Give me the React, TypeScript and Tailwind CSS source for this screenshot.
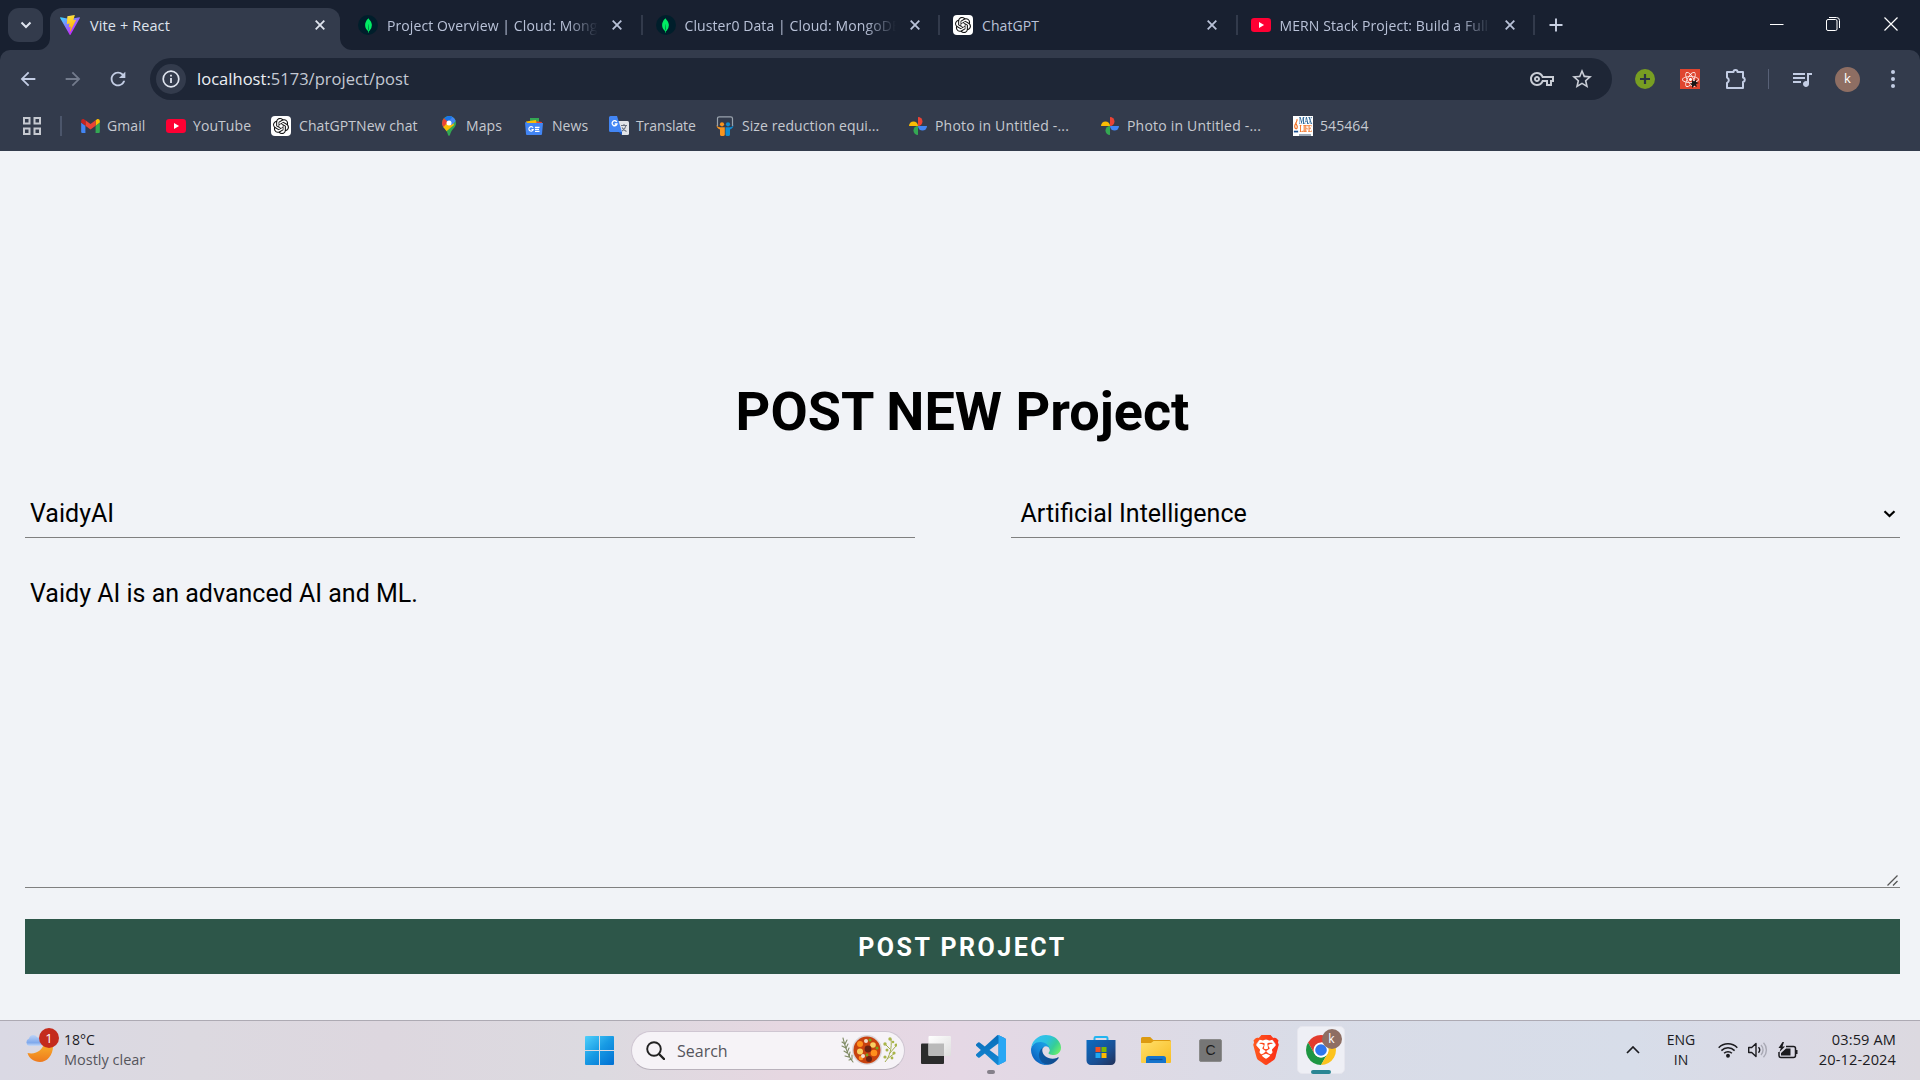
import type { ReactNode } from "react";
import { SiOpenai, SiMongodb, SiBrave } from "react-icons/si";
import { MdArrowBack, MdArrowForward, MdRefresh, MdStarBorder, MdOutlineVpnKey, MdQueueMusic } from "react-icons/md";
import { FaReact } from "react-icons/fa";

/* ---------- Logos ---------- */

function ViteLogo() {
  return (
    <svg viewBox="0 0 256 257" className="size-5">
      <defs>
        <linearGradient id="viteA" x1="0" x2=".6" y1=".1" y2=".8">
          <stop offset="0" stopColor="#41d1ff" />
          <stop offset="1" stopColor="#bd34fe" />
        </linearGradient>
        <linearGradient id="viteB" x1=".4" x2=".6" y1="0" y2="1">
          <stop offset="0" stopColor="#ffea83" />
          <stop offset=".1" stopColor="#ffdd35" />
          <stop offset="1" stopColor="#ffa800" />
        </linearGradient>
      </defs>
      <path fill="url(#viteA)" d="M255.153 37.938L134.897 252.976c-2.483 4.44-8.862 4.466-11.382.048L.875 37.958c-2.746-4.814 1.371-10.646 6.827-9.67l120.385 21.517a6.537 6.537 0 0 0 2.322-.004l117.867-21.483c5.438-.991 9.574 4.796 6.877 9.62Z" />
      <path fill="url(#viteB)" d="M185.432.063L96.44 17.501a3.268 3.268 0 0 0-2.634 3.014l-5.474 92.456a3.268 3.268 0 0 0 3.997 3.378l24.777-5.718c2.318-.535 4.413 1.507 3.936 3.838l-7.361 36.047c-.495 2.426 1.782 4.5 4.151 3.78l15.304-4.649c2.372-.72 4.652 1.36 4.15 3.788l-11.698 56.621c-.732 3.542 3.979 5.473 5.943 2.437l1.313-2.028l72.516-144.72c1.215-2.423-.88-5.186-3.54-4.672l-25.505 4.922c-2.396.462-4.435-1.77-3.759-4.114l16.646-57.705c.677-2.35-1.37-4.583-3.769-4.113Z" />
    </svg>
  );
}

function MongoLogo() {
  return (
    <span className="flex size-5 items-center justify-center rounded-full bg-[#001e2b]">
      <SiMongodb className="size-[15px] text-[#00ed64]" />
    </span>
  );
}

function OpenAiLogo() {
  return (
    <span className="flex size-5 items-center justify-center rounded-[4px] bg-white">
      <SiOpenai className="size-4 text-[#111]" />
    </span>
  );
}

function YouTubeLogo() {
  return (
    <svg viewBox="0 0 20 14" className="h-[14px] w-5">
      <rect width="20" height="14" rx="3.2" fill="#ff0033" />
      <path d="M8 4.1v5.8L13.1 7z" fill="#fff" />
    </svg>
  );
}

function GmailLogo() {
  return (
    <svg viewBox="52 42 88 66" className="h-[14px] w-[19px]">
      <path fill="#4285f4" d="M58 108h14V74L52 59v43c0 3.32 2.69 6 6 6" />
      <path fill="#34a853" d="M120 108h14c3.32 0 6-2.69 6-6V59l-20 15" />
      <path fill="#fbbc04" d="M120 48v26l20-15v-8c0-7.42-8.47-11.65-14.4-7.2" />
      <path fill="#ea4335" d="M72 74V48l24 18 24-18v26L96 92" />
      <path fill="#c5221f" d="M52 51v8l20 15V48l-5.6-4.2c-5.94-4.45-14.4-.22-14.4 7.2" />
    </svg>
  );
}

function MapsLogo() {
  return (
    <svg viewBox="0 0 14 20" className="h-5 w-[14px]">
      <defs>
        <clipPath id="pin">
          <path d="M7 0a7 7 0 0 1 7 7c0 4-3.2 5.600-4.700 8.500C8.200 17.600 8 20 7 20s-1.200-2.400-2.300-4.500C3.200 12.600 0 11 0 7a7 7 0 0 1 7-7z" />
        </clipPath>
      </defs>
      <g clipPath="url(#pin)">
        <path fill="#34a853" d="M0 0h14v20H0z" />
        <path fill="#fbbc04" d="M0 11 9 1l3 8-8.500 7H0z" />
        <path fill="#4285f4" d="M4 0h10v5L9.500 9 6 7l3-5z" />
        <path fill="#1a73e8" d="M2 2 7-1l4 1-5 7z" />
        <path fill="#ea4335" d="M0 2h1.700L6 6 1.500 11 0 10z" />
      </g>
      <circle cx="7" cy="7" r="2.500" fill="#fff" />
    </svg>
  );
}

function NewsLogo() {
  return (
    <svg viewBox="0 0 18 17" className="h-[17px] w-[18px]">
      <path fill="#34a853" d="M5 0h9v8H5z" />
      <path fill="#ea4335" d="m9 3 8 1-1 8H9z" />
      <path fill="#fbbc04" d="M1 3.500 11 2l1 7H1z" />
      <path fill="#4285f4" d="M0 4.500 2 4v1h16l-1 11a1 1 0 0 1-1 1H2a1 1 0 0 1-1-1z" />
      <path fill="none" stroke="#fff" strokeWidth="1.200" d="M8 9.800A2.200 2.200 0 1 0 8.200 11.500H6.500M10 9.300h4.500M10 11.300h4M10 13.300h4.500" />
    </svg>
  );
}

function TranslateLogo() {
  return (
    <svg viewBox="0 0 20 20" className="size-5">
      <path fill="#e2e4e8" d="M9 5h9.500A1.500 1.500 0 0 1 20 6.500v11a1.500 1.500 0 0 1-1.500 1.500H13z" />
      <path fill="none" stroke="#6b7280" strokeWidth="1.100" d="M12 9.500h6M15 8v1.500M17 9.500c-.5 3-2.500 4.500-4 5.500M13 11.500c1 2 2.500 3 4.500 4" />
      <path fill="#4285f4" d="M1.500 0H8l5 16H1.500A1.500 1.500 0 0 1 0 14.500v-13A1.500 1.500 0 0 1 1.500 0z" />
      <path fill="#1a56c4" d="m9.500 16 3.500 3 0-3z" />
      <path fill="none" stroke="#fff" strokeWidth="1.300" d="M7.800 6A2.500 2.500 0 1 0 8 8H5.700" />
    </svg>
  );
}

function SlideShareLogo() {
  return (
    <svg viewBox="0 0 18 20" className="h-5 w-[18px]">
      <path d="M1.500 10V2.500a1.700 1.700 0 0 1 1.700-1.700h11.600a1.700 1.700 0 0 1 1.700 1.700V10" fill="none" stroke="#9aa3ad" strokeWidth="1.200" />
      <circle cx="6" cy="8.300" r="2.100" fill="#f7941e" />
      <circle cx="12" cy="8.300" r="2.100" fill="#0f8bd0" />
      <path fill="#f7941e" d="M.5 9c1.500 2.300 3 2.500 8.300 2.300V18.500c0 1-1 1.500-2.400 1.500S4 19.500 4 18.500V13.500C1.800 12.800.5 11 .5 9z" />
      <path fill="#0f8bd0" d="M17.500 9c-1.500 2.300-3 2.500-8 2.300v7.200c0 1 .8 1.500 2.200 1.500s2.300-.5 2.300-1.500V13.500c2.200-.7 3.500-2.500 3.500-4.500z" />
    </svg>
  );
}

function PhotosLogo() {
  return (
    <svg viewBox="0 0 18 18" className="size-[18px]">
      <path fill="#ea4335" d="M9 0a4.500 4.500 0 0 1 4.500 4.500A4.500 4.500 0 0 1 9 9z" />
      <path fill="#4285f4" d="M18 9a4.500 4.500 0 0 1-9 0z" />
      <path fill="#34a853" d="M9 18a4.500 4.500 0 0 1 0-9z" />
      <path fill="#fbbc04" d="M0 9a4.500 4.500 0 0 1 9 0z" />
    </svg>
  );
}

function MaxLifeLogo() {
  return (
    <span className="flex size-5 items-center bg-white">
      <svg viewBox="0 0 7 20" className="h-5 w-[6px] shrink-0">
        <path d="M4.500 2c1.500 3-3 5-2.500 9 .4 3 3 3 3 0 0-2-1.500-3-2-5" fill="none" stroke="#f37021" strokeWidth="1.400" />
        <path d="M1 15.500h5v2H1z" fill="#1b4f8f" />
      </svg>
      <span className="flex flex-col items-center font-['Liberation_Serif'] text-[6px] leading-[8px] font-bold tracking-[-0.5px]">
        <span className="scale-y-[1.6] text-[#2a6496]">MAX</span>
        <span className="scale-y-[1.6] text-[#f37021]">LIFE</span>
        <span className="mt-px h-[2px] w-3 bg-[#9aa8b8]" />
      </span>
    </span>
  );
}

function ChromeLogo() {
  return (
    <svg viewBox="0 0 48 48" className="size-[30px]">
      <path fill="#e33b2e" d="M24 12h20.780a24 24 0 0 0-41.560 0L13.610 30z" />
      <path fill="#1e9642" d="M34.390 30 24 48A24 24 0 0 1 3.220 12L13.610 30a12 12 0 0 0 20.780 0" />
      <path fill="#fcc31e" d="M34.390 30 24 48A24 24 0 0 0 44.780 12H24a12 12 0 0 1 10.390 18z" />
      <circle cx="24" cy="24" r="12" fill="#fff" />
      <circle cx="24" cy="24" r="9.300" fill="#2f77ee" />
    </svg>
  );
}

function EdgeLogo() {
  return (
    <svg viewBox="0 0 256 256" className="size-[30px]">
      <defs>
        <linearGradient id="edgeA" x1="0" x2="1" y1=".6" y2=".6">
          <stop offset="0" stopColor="#0c59a4" />
          <stop offset="1" stopColor="#114a8b" />
        </linearGradient>
        <linearGradient id="edgeB" x1=".9" x2=".3" y1=".3" y2="1">
          <stop offset="0" stopColor="#1b9de2" />
          <stop offset=".5" stopColor="#1483d8" />
          <stop offset="1" stopColor="#0b5cb8" />
        </linearGradient>
        <linearGradient id="edgeC" x1="0" x2="1" y1=".2" y2=".7">
          <stop offset="0" stopColor="#35c1f1" />
          <stop offset=".45" stopColor="#2dc2df" />
          <stop offset=".75" stopColor="#36cd98" />
          <stop offset="1" stopColor="#66eb6e" />
        </linearGradient>
      </defs>
      <g transform="translate(-4.630 -4.920)">
        <path fill="url(#edgeA)" d="M235.680,195.460a93.730,93.730,0,0,1-10.540,4.710,101.870,101.870,0,0,1-35.900,6.460c-47.320,0-88.540-32.550-88.540-74.320A31.480,31.480,0,0,1,117.130,105c-42.800,1.800-53.800,46.400-53.800,72.530,0,73.880,68.090,81.370,82.760,81.370,7.910,0,19.840-2.300,27-4.560l1.310-.44A128.340,128.340,0,0,0,241,201.100a4,4,0,0,0-5.340-5.640Z" />
        <path fill="url(#edgeB)" d="M110.340,246.340A79.200,79.200,0,0,1,87.600,225,80.720,80.720,0,0,1,117.130,105c3.120-1.470,8.450-4.130,15.540-4a32.350,32.350,0,0,1,25.690,13,31.880,31.880,0,0,1,6.360,18.660c0-.21,24.460-79.600-80-79.600-43.900,0-80,41.660-80,78.210a130.150,130.150,0,0,0,12.110,56,128,128,0,0,0,156.380,67.110,75.550,75.550,0,0,1-62.780-8Z" />
        <path fill="url(#edgeC)" d="M156.940,153.780c-.81,1.050-3.300,2.500-3.300,5.660,0,2.610,1.700,5.120,4.720,7.230,14.380,10,41.490,8.680,41.560,8.680a59.560,59.560,0,0,0,30.270-8.350A61.380,61.380,0,0,0,260.630,114c.26-22.410-8-37.310-11.340-43.910C228.090,28.760,182.350,5,132.630,5A128,128,0,0,0,4.630,131.200C5.110,94.710,41.340,65.250,84.630,65.250c3.510,0,23.510.34,42.070,10.070,16.340,8.580,24.900,18.940,30.850,29.210,6.180,10.670,7.280,24.150,7.280,29.520S162.090,147.370,156.940,153.780Z" />
      </g>
    </svg>
  );
}

function VsCodeLogo() {
  return (
    <svg viewBox="0 0 24 24" className="size-[30px]">
      <defs>
        <linearGradient id="vsA" x1="0" x2="0" y1="0" y2="1">
          <stop offset="0" stopColor="#0a6db8" />
          <stop offset="1" stopColor="#1387d4" />
        </linearGradient>
      </defs>
      <path fill="url(#vsA)" d="M23.150 2.587L18.210.21a1.494 1.494 0 0 0-1.705.29l-9.460 8.630-4.120-3.128a.999.999 0 0 0-1.276.057L.327 7.261A1 1 0 0 0 .326 8.740L3.899 12 .326 15.260a1 1 0 0 0 .001 1.479L1.650 17.940a.999.999 0 0 0 1.276.057l4.120-3.128 9.460 8.630a1.492 1.492 0 0 0 1.704.29l4.942-2.377A1.500 1.500 0 0 0 24 20.060V3.939a1.500 1.500 0 0 0-.850-1.352zm-5.146 14.861L10.826 12l7.178-5.448v10.896z" />
      <path fill="#29a7f4" d="M23.150 2.587 18.210.21a1.494 1.494 0 0 0-1.100-.050c.5.200.894.700.894 1.390v20.900c0 .7-.4 1.200-.9 1.400.37.130.77.110 1.106-.060l4.942-2.377A1.500 1.500 0 0 0 24 20.060V3.939a1.500 1.500 0 0 0-.850-1.352z" />
    </svg>
  );
}

function StoreLogo() {
  return (
    <svg viewBox="0 0 30 30" className="size-[30px]">
      <defs>
        <linearGradient id="storeA" x1="0" x2="1" y1="0" y2="1">
          <stop offset="0" stopColor="#0a6cc2" />
          <stop offset=".6" stopColor="#1a4f93" />
          <stop offset="1" stopColor="#213058" />
        </linearGradient>
      </defs>
      <path d="M8.500 7V3.200A1.200 1.200 0 0 1 9.700 2h10.600a1.200 1.200 0 0 1 1.200 1.200V7" fill="none" stroke="#22b5f0" strokeWidth="2" />
      <path fill="url(#storeA)" d="M.5 5h29v20.500a4.500 4.500 0 0 1-4.500 4.500H5A4.500 4.500 0 0 1 .5 25.500z" />
      <path fill="#f25022" d="M9.500 12h5v5h-5z" />
      <path fill="#7fba00" d="M15.500 12h5v5h-5z" />
      <path fill="#1fa8f0" d="M9.500 18h5v5h-5z" />
      <path fill="#ffb900" d="M15.500 18h5v5h-5z" />
    </svg>
  );
}

function FolderLogo() {
  return (
    <svg viewBox="0 0 30 26" className="h-[26px] w-[30px]">
      <defs>
        <linearGradient id="folderA" x1="0" x2="1" y1="0" y2="1">
          <stop offset="0" stopColor="#ffdf6b" />
          <stop offset="1" stopColor="#f8bd22" />
        </linearGradient>
      </defs>
      <path fill="#dc9a10" d="M0 1.500A1.500 1.500 0 0 1 1.500 0h7.700l3 3H28.500A1.500 1.500 0 0 1 30 4.500V12H0z" />
      <path fill="url(#folderA)" d="M0 6h10l2.600-2H29a1 1 0 0 1 1 1v20a1 1 0 0 1-1 1H1a1 1 0 0 1-1-1z" />
      <path fill="#1574cc" d="M5 26v-4.500A2.500 2.500 0 0 1 7.500 19h15a2.500 2.500 0 0 1 2.500 2.500V26z" />
      <path stroke="#0b4f9c" strokeWidth="1.200" d="M8.500 22.500h13" />
    </svg>
  );
}

function BraveLogo() {
  return (
    <svg viewBox="0 0 24 24" className="size-[30px]">
      <defs>
        <linearGradient id="braveA" x1="0" x2="1" y1="0" y2="0">
          <stop offset="0" stopColor="#ff5a1f" />
          <stop offset="1" stopColor="#fb2d16" />
        </linearGradient>
      </defs>
      <path fill="#fff" d="M7 4h10l2.500 4-2 10-5.500 4-5.500-4-2-10z" />
      <SiBrave size={24} fill="url(#braveA)" />
    </svg>
  );
}

function WindowsLogo() {
  return (
    <svg viewBox="0 0 29 29" className="size-[29px]">
      <defs>
        <linearGradient id="winA" gradientUnits="userSpaceOnUse" x1="0" x2="26" y1="0" y2="29">
          <stop offset="0" stopColor="#4fd0fb" />
          <stop offset=".5" stopColor="#189be4" />
          <stop offset="1" stopColor="#0273d4" />
        </linearGradient>
      </defs>
      <path fill="url(#winA)" d="M1 0h13v14H0V1a1 1 0 0 1 1-1zM15 0h13a1 1 0 0 1 1 1v13H15zM0 15h14v14H1a1 1 0 0 1-1-1zM15 15h14v13a1 1 0 0 1-1 1H15z" />
    </svg>
  );
}

function TaskViewIcon() {
  return (
    <svg viewBox="0 0 30 28" className="h-7 w-[30px]">
      <defs>
        <linearGradient id="tvA" x1="0" x2="1" y1="0" y2="1">
          <stop offset="0" stopColor="#fff" />
          <stop offset="1" stopColor="#dedede" />
        </linearGradient>
      </defs>
      <rect y="7.500" width="23" height="20.500" rx="1" fill="#2b2c2c" />
      <rect x="7.500" width="22.500" height="20" rx="1" fill="url(#tvA)" />
      <path d="M7.500 7.500H23V20H8.500a1 1 0 0 1-1-1z" fill="#b9b9b9" />
    </svg>
  );
}

function StewIllustration() {
  return (
    <svg viewBox="0 0 56 32" className="h-8 w-14">
      <g fill="none" stroke="#7f8a63" strokeWidth="1.100" strokeLinecap="round">
        <path d="M2 4c2 8 4 17 10 24" />
        <path d="M1 8l3 2 2-4M1 12l4 2 2-4M3 17l3 2 2-5M4 22l4 1 1-5M8 26l3-1v-4" />
      </g>
      <g stroke="#a3ad4e" strokeWidth="1" fill="none">
        <path d="M44 28c5-6 7-14 6-23M46 25l8-6M48 20l7-8M49 15l-5-5" />
      </g>
      <g fill="#a9b54a">
        <circle cx="49" cy="5" r="1.700" /><circle cx="44" cy="10" r="1.700" /><circle cx="55" cy="11" r="1.500" />
        <circle cx="53" cy="19" r="1.600" /><circle cx="46" cy="16" r="1.500" /><circle cx="44" cy="23" r="1.600" />
        <circle cx="51" cy="24" r="1.400" /><circle cx="52" cy="8" r="1.300" />
      </g>
      <circle cx="26" cy="16" r="15" fill="#d9d6da" />
      <circle cx="26" cy="16" r="13.500" fill="#c8420f" />
      <g fill="#ff8f1c"><circle cx="19" cy="10" r="3" /><circle cx="33" cy="19" r="3.300" /><circle cx="20" cy="24" r="2.300" /></g>
      <g fill="#f8cf62"><circle cx="19" cy="17.500" r="3" /><circle cx="32" cy="11" r="2.800" /></g>
      <g fill="#6b2413"><circle cx="27" cy="15" r="3.400" /><circle cx="28" cy="25" r="3" /></g>
      <g fill="#f2dfcf"><circle cx="25" cy="7" r="2" /><circle cx="22" cy="22" r="2" /></g>
      <g fill="#77a51d"><circle cx="29" cy="6" r="1.500" /><circle cx="36" cy="14" r="1.500" /><circle cx="26" cy="21" r="1.400" /></g>
    </svg>
  );
}

function WeatherIcon() {
  return (
    <div className="relative size-[34px]">
      <svg viewBox="0 0 34 34" className="size-[34px]">
        <defs>
          <linearGradient id="moon" x1="0" x2="0" y1="0" y2="1">
            <stop offset="0" stopColor="#f9b52c" />
            <stop offset="1" stopColor="#ee7a1e" />
          </linearGradient>
          <linearGradient id="cloud" x1="0" x2="0" y1="0" y2="1">
            <stop offset="0" stopColor="#bcd3f7" />
            <stop offset=".7" stopColor="#7fa9ec" />
            <stop offset="1" stopColor="#c8dbf8" />
          </linearGradient>
        </defs>
        <path fill="url(#moon)" d="M2.500 25C11 27 18.500 22 19 14l9 4c0 9.500-6 16-13 16-6 0-11-3.500-12.500-9z" />
        <path fill="url(#cloud)" d="M4 18a4 4 0 0 1 0-7.500c.5-3.500 5.500-5.500 8.500-1 3.500 0 6 2.500 6 4.500S17 18 14 18z" />
      </svg>
      <span className="absolute top-0 right-0 flex size-5 items-center justify-center rounded-full bg-[#c42b1c] text-[13px] leading-none text-white">1</span>
    </div>
  );
}

/* ---------- Browser ---------- */

function CloseIcon() {
  return (
    <svg viewBox="0 0 10 10" className="size-[10px] shrink-0">
      <path d="M.7.7l8.600 8.600M9.300.7L.7 9.300" stroke="currentColor" strokeWidth="1.800" />
    </svg>
  );
}

const TABS: { title: string; icon: ReactNode; faded: boolean }[] = [
  { title: "Project Overview | Cloud: Mong", icon: <MongoLogo />, faded: true },
  { title: "Cluster0 Data | Cloud: MongoDB", icon: <MongoLogo />, faded: true },
  { title: "ChatGPT", icon: <OpenAiLogo />, faded: false },
  { title: "MERN Stack Project: Build a Full", icon: <YouTubeLogo />, faded: true },
];

function TabStrip() {
  return (
    <div className="flex h-[50px] bg-[#182030] text-[14px] tracking-[0.1px] text-[#b9c2d8]">
      <div className="mt-2 ml-2 flex h-[34px] w-[35px] items-center justify-center rounded-[11px] bg-[#333b4c] text-[#dfe4ee]">
        <svg viewBox="0 0 12 8" className="h-2 w-3"><path d="M1.500 1.500 6 6l4.500-4.500" fill="none" stroke="currentColor" strokeWidth="2" /></svg>
      </div>
      <div className="relative ml-[7px] flex w-[290px] pt-2">
        <svg viewBox="0 0 12 12" className="absolute bottom-0 -left-3 size-3"><path d="M12 0v12H0A12 12 0 0 0 12 0z" fill="#333b4c" /></svg>
        <div className="flex h-full w-full items-center rounded-t-[12px] bg-[#333b4c] pr-[15px] pb-2 pl-[10px] text-[#dfe4ee]">
          <ViteLogo />
          <span className="ml-[10px] flex-1 pt-px text-[14.500px]">Vite + React</span>
          <CloseIcon />
        </div>
        <svg viewBox="0 0 12 12" className="absolute -right-3 bottom-0 size-3"><path d="M0 0v12h12A12 12 0 0 1 0 0z" fill="#333b4c" /></svg>
      </div>
      <div className="ml-[5px] flex">
        {TABS.map((t) => (
          <div key={t.title} className="flex h-full w-[297.500px] items-center pl-[13px]">
            {t.icon}
            <span className={"ml-[9px] w-[211px] overflow-hidden whitespace-nowrap" + (t.faded ? " [mask-image:linear-gradient(90deg,#000_85%,transparent)]" : "")}>{t.title}</span>
            <span className="ml-[14px] flex"><CloseIcon /></span>
            <span className="ml-auto h-5 w-[2px] bg-[#323a4b]" />
          </div>
        ))}
      </div>
      <div className="ml-[14px] flex items-center text-[#c8d0e2]">
        <svg viewBox="0 0 14 14" className="size-[14px]"><path d="M7 .5v13M.5 7h13" stroke="currentColor" strokeWidth="1.900" /></svg>
      </div>
      <div className="ml-auto flex h-full items-center pr-[22px] pb-[2px] text-white">
        <svg viewBox="0 0 14 14" className="size-[14px]"><path d="M0 7.500h13.500" stroke="currentColor" /></svg>
        <svg viewBox="0 0 14 14" className="ml-[42px] size-[14px]">
          <path d="M3 .5h7.500a3 3 0 0 1 3 3V11" fill="none" stroke="currentColor" />
          <rect x=".5" y="2.500" width="10.500" height="11" rx="1.500" fill="none" stroke="currentColor" />
        </svg>
        <svg viewBox="0 0 14 14" className="ml-[44px] size-[14px]"><path d="M.5.5l13 13M13.500.5l-13 13" stroke="currentColor" strokeWidth="1.200" /></svg>
      </div>
    </div>
  );
}

function Toolbar() {
  return (
    <div className="flex h-[58px] items-center rounded-t-[10px] bg-[#333b4c] text-[#c3cde4]">
      <div className="ml-[16.500px] flex w-[133.500px] items-center">
        <MdArrowBack className="size-[22px]" />
        <MdArrowForward className="ml-[23px] size-[22px] text-[#737b8c]" />
        <MdRefresh className="ml-[23px] size-[22px]" />
      </div>
      <div className="flex h-[42px] w-[1462px] items-center rounded-full bg-[#1e2636] pl-[6px]">
        <span className="flex size-[30px] items-center justify-center rounded-full bg-[#333b4c] text-[#dfe4ee]">
          <svg viewBox="0 0 18 18" className="size-[18px]">
            <circle cx="9" cy="9" r="7.800" fill="none" stroke="currentColor" strokeWidth="1.700" />
            <path d="M9 8v5M9 4.700v1.800" stroke="currentColor" strokeWidth="1.800" />
          </svg>
        </span>
        <span className="ml-[11px] flex-1 pt-px text-[16.500px] tracking-[0.030px] text-[#c4c9d3]"><span className="text-[#eceff4]">localhost:</span>5173/project/post</span>
        <MdOutlineVpnKey className="size-6 text-[#c9cdd6]" />
        <MdStarBorder className="mr-[18px] ml-[16px] size-6 text-[#c9cdd6]" />
      </div>
      <span className="ml-[23px] flex size-5 items-center justify-center rounded-full bg-[#789e22]">
        <svg viewBox="0 0 10 10" className="size-[10px]"><path d="M5 0v10M0 5h10" stroke="#2a3444" strokeWidth="2.200" /></svg>
      </span>
      <span className="relative ml-[25px] flex size-5 items-center justify-center bg-[#e0452f]">
        <FaReact className="size-[17px] text-white" />
        <svg viewBox="0 0 10 10" className="absolute right-px bottom-px size-[10px]"><path d="M3 2l2 1.500L7.500 1 7 4l3 1-3 1 1 3-2.500-1.500L3 10V7L1 6l2-1z" fill="#171717" /></svg>
      </span>
      <svg viewBox="0 0 22 22" className="ml-[25px] size-[22px]">
        <path d="M2 4h6.500a2 2 0 0 1 4 0H18v5.500a2.300 2.300 0 0 1 0 4.500v6H2v-5a3 3 0 0 0 0-5.500z" fill="none" stroke="currentColor" strokeWidth="2" strokeLinejoin="round" />
      </svg>
      <span className="ml-[21px] h-5 w-px bg-[#586177]" />
      <MdQueueMusic className="ml-[21px] size-6" />
      <span className="ml-[21px] flex size-[25px] items-center justify-center rounded-full bg-[#8e6e63] text-[13px] text-white">k</span>
      <svg viewBox="0 0 4 18" className="ml-[31px] h-[18px] w-1" fill="currentColor"><circle cx="2" cy="2" r="2" /><circle cx="2" cy="9" r="2" /><circle cx="2" cy="16" r="2" /></svg>
    </div>
  );
}

const BOOKMARKS: { label: string; icon: ReactNode; cls: string }[] = [
  { label: "Gmail", icon: <GmailLogo />, cls: "w-[85px] gap-[7px]" },
  { label: "YouTube", icon: <YouTubeLogo />, cls: "w-[105px] gap-[7px]" },
  { label: "ChatGPTNew chat", icon: <OpenAiLogo />, cls: "w-[171px] gap-[8px]" },
  { label: "Maps", icon: <MapsLogo />, cls: "w-[83px] gap-[10px]" },
  { label: "News", icon: <NewsLogo />, cls: "w-[84px] gap-[9px]" },
  { label: "Translate", icon: <TranslateLogo />, cls: "w-[107px] gap-[7px] tracking-[-0.100px]" },
  { label: "Size reduction equi...", icon: <SlideShareLogo />, cls: "w-[193px] gap-[8px]" },
  { label: "Photo in Untitled -...", icon: <PhotosLogo />, cls: "w-[192px] gap-[8px] tracking-[0.200px]" },
  { label: "Photo in Untitled -...", icon: <PhotosLogo />, cls: "w-[192px] gap-[8px] tracking-[0.200px]" },
  { label: "545464", icon: <MaxLifeLogo />, cls: "w-[90px] gap-[7px]" },
];

function BookmarksBar() {
  return (
    <div className="flex h-[43px] items-center bg-[#333b4c] pb-[7px] pl-[23px] text-[14px] tracking-[0.080px] text-[#c6c9d0]">
      <svg viewBox="0 0 18 18" className="size-[18px]" fill="none" stroke="currentColor" strokeWidth="2">
        <path d="M1 1h5.500v5.500H1zM11.500 1H17v5.500h-5.500zM1 11.500h5.500V17H1zM11.500 11.500H17V17h-5.500z" />
      </svg>
      <span className="mr-[19px] ml-[19px] h-5 w-[2px] bg-[#4c566b]" />
      {BOOKMARKS.map((b, i) => (
        <div key={i} className={"flex shrink-0 items-center whitespace-nowrap " + b.cls}>
          {b.icon}
          <span className="pb-[2px]">{b.label}</span>
        </div>
      ))}
    </div>
  );
}

/* ---------- Page ---------- */

function PostProject() {
  return (
    <main className="flex h-[869px] flex-col bg-[#f1f3f7] px-[25px] pr-5 pt-[226px] font-['Roboto'] text-[25px] text-black">
      <h1 className="text-center text-[54px] leading-[70px] font-bold">POST NEW Project</h1>
      <div className="mt-[41px] grid grid-cols-2 gap-24">
        <input defaultValue="VaidyAI" className="h-[50px] border-b border-[#808080] bg-transparent px-[5px] pt-[2px] outline-none" />
        <div className="flex h-[50px] items-center justify-between border-b border-[#808080] pt-[3px] pr-[4px] pl-[10px]">
          <span>Artificial Intelligence</span>
          <svg viewBox="0 0 13 8" className="h-2 w-[13px]"><path d="M1.500 1.300 6.500 6l5-4.700" fill="none" stroke="#000" strokeWidth="2.200" /></svg>
        </div>
      </div>
      <div className="relative mt-[30px] h-[320px]">
        <textarea defaultValue="Vaidy AI is an advanced AI and ML." className="block h-full w-full resize-none border-b border-[#808080] bg-transparent px-[5px] pt-[11px] leading-[30px] outline-none" />
        <svg viewBox="0 0 11 11" className="absolute right-[2px] bottom-[2px] size-[11px]"><path d="M.5 10.500l10-10M6 10.500l4.500-4.500" stroke="#555" strokeWidth="1.300" /></svg>
      </div>
      <button className="mt-[31px] h-[55px] bg-[#2d5649] pt-[2px] font-bold tracking-[2.500px] text-white">POST PROJECT</button>
    </main>
  );
}

/* ---------- Taskbar ---------- */

const APPS: ReactNode[] = [
  <TaskViewIcon />,
  <VsCodeLogo />,
  <EdgeLogo />,
  <StoreLogo />,
  <FolderLogo />,
  <span className="flex size-[23px] items-center justify-center rounded-[2px] border border-[#8b8b8b] bg-[#767676] font-['Liberation_Sans'] text-[14px] text-[#1c1c1c]">C</span>,
  <BraveLogo />,
];

function Taskbar() {
  return (
    <footer className="flex h-[60px] items-center border-t border-[#adaab3] bg-[linear-gradient(90deg,#dad9e4_0%,#dcd9e0_10%,#ddd7df_20%,#dcdae0_31%,#e6d7e1_41%,#e5d8e5_50%,#dfdae5_58%,#d9dce7_68%,#d7dde9_85%,#dbdae5_93%,#dcd9e0_100%)] pb-px text-[14px] text-[#1b1b1f]">
      <div className="flex w-[585px] items-center pl-[25px]">
        <div className="pb-[10px]"><WeatherIcon /></div>
        <div className="ml-[5px] pb-px leading-5">
          <div>18°C</div>
          <div className="text-[14.500px] text-[#55555c]">Mostly clear</div>
        </div>
      </div>
      <WindowsLogo />
      <div className="ml-[17px] flex h-[39px] w-[274px] items-center rounded-full border border-[#cfc6d2] border-b-[#b9b2bc] bg-[#f6f3f7] pr-[7px] pl-[14px]">
        <svg viewBox="0 0 19 19" className="size-[19px]"><circle cx="8" cy="8" r="6.800" fill="none" stroke="#222" strokeWidth="1.900" /><path d="m13 13 5 5" stroke="#222" strokeWidth="2.400" strokeLinecap="round" /></svg>
        <span className="ml-3 flex-1 pt-px text-[16px] text-[#55555c]">Search</span>
        <StewIllustration />
      </div>
      <div className="ml-[3px] flex h-full">
        {APPS.map((icon, i) => (
          <div key={i} className="relative flex w-[55px] items-center justify-center">
            {icon}
            {i === 1 && <span className="absolute bottom-[5px] h-1 w-2 rounded-full bg-[#85808a]" />}
          </div>
        ))}
        <div className="flex w-[55px] items-center justify-center">
          <div className="relative flex size-12 items-center justify-center rounded-[5px] border border-[#e6e6ee] bg-[#eeeff5]">
            <ChromeLogo />
            <span className="absolute top-[2px] right-[2px] flex size-5 items-center justify-center rounded-full bg-[#8e6e63] text-[12px] text-white">k</span>
            <span className="absolute -bottom-px h-1 w-5 rounded-full bg-[#2a8694]" />
          </div>
        </div>
      </div>
      <div className="ml-auto flex items-center pr-[24px]">
        <svg viewBox="0 0 14 8" className="h-2 w-[14px]"><path d="M1 7l6-6 6 6" fill="none" stroke="#1b1b1f" strokeWidth="1.700" /></svg>
        <div className="ml-6 w-[34px] pb-px text-center leading-5"><div>ENG</div><div>IN</div></div>
        <svg viewBox="0 0 20 16" className="ml-5 h-4 w-5" fill="none" stroke="#1b1b1f" strokeWidth="1.500">
          <path d="M.7 5.700a13.200 13.200 0 0 1 18.600 0M3.400 8.600a9.300 9.300 0 0 1 13.200 0M6.100 11.300a5.500 5.500 0 0 1 7.800 0" />
          <circle cx="10" cy="13.800" r="1.200" fill="#1b1b1f" />
        </svg>
        <svg viewBox="0 0 20 16" className="ml-[10px] h-4 w-5" fill="none" strokeWidth="1.400">
          <path d="M.7 5.500h3L8 1.500v13l-4.300-4h-3z" stroke="#1b1b1f" strokeLinejoin="round" />
          <path d="M10.500 5.300a4 4 0 0 1 0 5.400" stroke="#1b1b1f" />
          <path d="M13 3a7.200 7.200 0 0 1 0 10M15.500.8a10.400 10.400 0 0 1 0 14.400" stroke="#a9a9b4" />
        </svg>
        <svg viewBox="0 0 20 17" className="ml-[10px] h-[17px] w-5">
          <path d="M8 4.500h7.500a2 2 0 0 1 2 2v7a2 2 0 0 1-2 2H3a2 2 0 0 1-2-2V10" fill="none" stroke="#1b1b1f" strokeWidth="1.500" />
          <path d="M18 8h1.500v4H18zM8 6.500h4.500v7H3V11z" fill="#1b1b1f" />
          <path d="M4.500 0 .5 6h2.300L1.500 10 7 4.500H4.500L6 0z" fill="#1b1b1f" />
        </svg>
        <div className="ml-[20px] w-[78px] pb-[3px] text-right text-[14.600px] leading-5 tracking-[0.100px] whitespace-nowrap"><div>03:59 AM</div><div>20-12-2024</div></div>
      </div>
    </footer>
  );
}

export default function App() {
  return (
    <div className="flex h-[1080px] w-[1920px] flex-col overflow-hidden bg-[#182030] font-['Open_Sans',sans-serif]">
      <TabStrip />
      <Toolbar />
      <BookmarksBar />
      <PostProject />
      <Taskbar />
    </div>
  );
}
